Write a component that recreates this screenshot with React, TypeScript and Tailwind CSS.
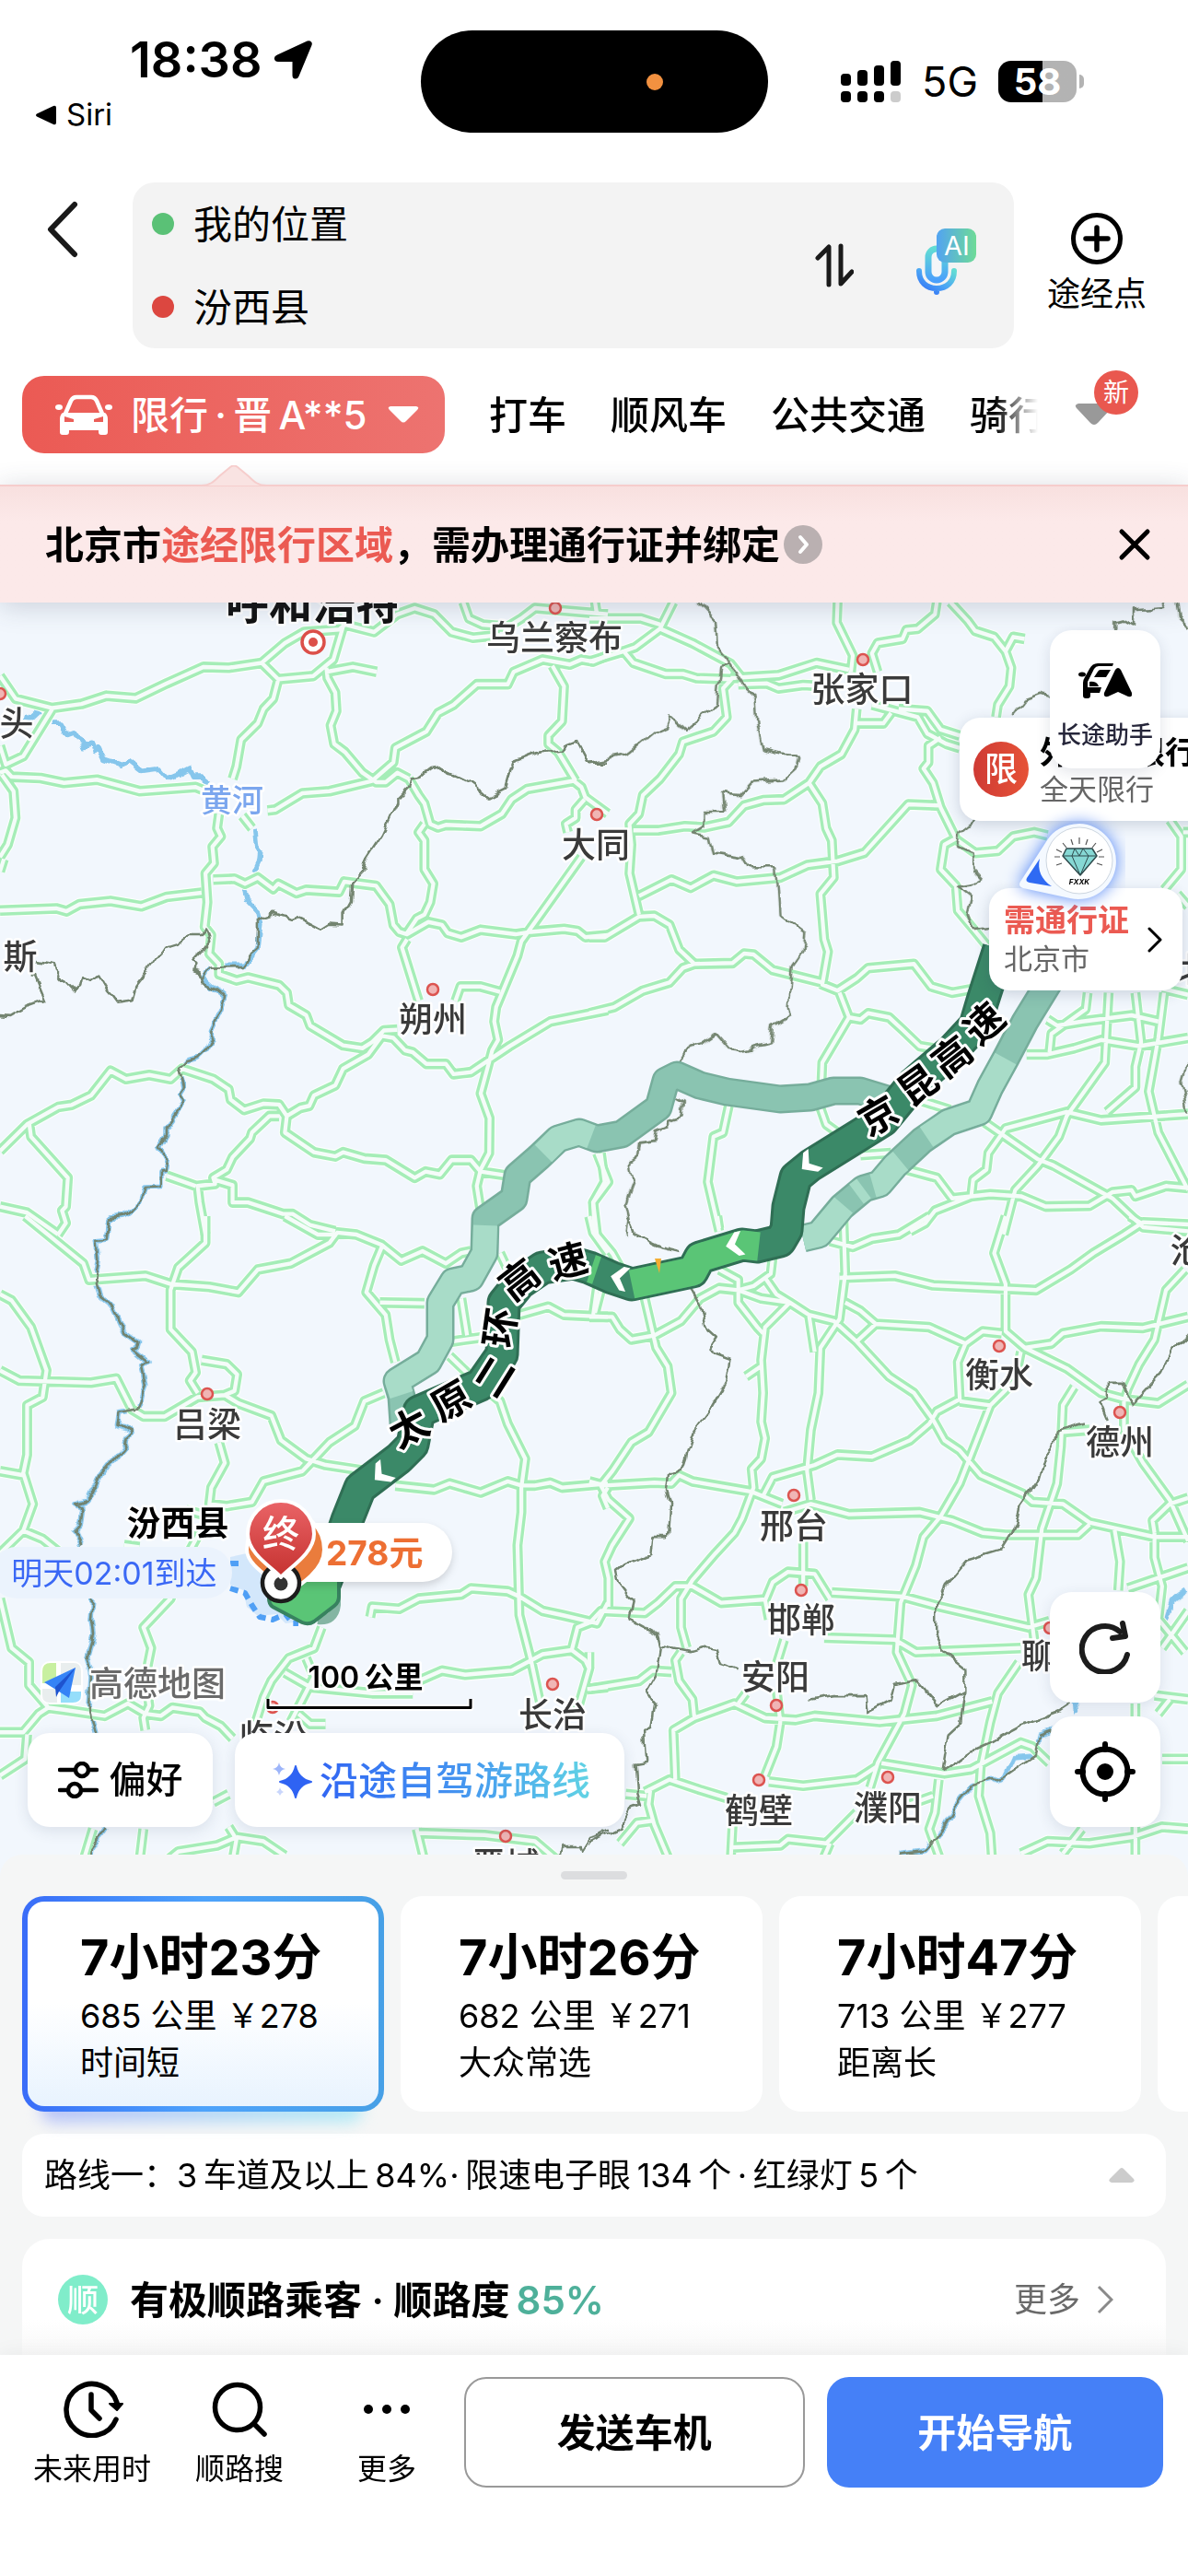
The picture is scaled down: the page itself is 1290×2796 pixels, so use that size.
import type { ReactNode } from 'react'

type Tile = { transform: string; roads: string; borders: string; rivers: string }
type City = { name: string; x: number; y: number; dot?: [number, number] }

// Map geometry is stored per tile, every tile has its own 1568 x 1568 grid
const tiles: Tile[] = [
  {
    transform: 'translate(0 640) scale(.4209 .4464)',
    roads:
      'M0 210L40 265 135 288 210 278 275 258 350 264 430 228 525 188 590 190 675 178 735 130 785 103 875 97 890 85 965 103 1025 60 1070 45 1120 60 1165 103 1220 117 1290 110' +
      'M675 178L718 218 808 210 860 170 885 90 890 30M718 218L705 265 680 290 665 325 622 365 610 430 600 460' +
      'M842 190L845 215 865 250 868 295 853 330 862 375 890 395 935 445 970 468 995 468 1025 445 1055 460M842 200L910 188 972 200' +
      'M0 445L15 440 30 455 105 458 165 470 250 462 360 490 505 480 530 490M135 290L60 405 15 425 0 380M5 450L35 490 40 555 20 620 0 650M10 655L0 685' +
      'M690 537L710 535 780 495 850 490 960 465 1015 420 1020 385 1100 345 1130 300 1170 280 1230 230 1310 230 1325 200 1400 170 1470 182 1500 170 1530 175 1568 160' +
      'M1055 460L1080 500 1095 520 1110 570 1130 578 1150 572 1240 575 1295 545 1320 510 1360 485 1480 465 1500 480 1510 505 1568 545M1508 510L1485 535 1485 555 1460 570 1465 590' +
      'M1425 185L1455 235 1450 320 1415 355 1415 375 1440 395 1485 465M1095 570L1080 590 1095 610 1095 680 1118 715 1110 760 1095 790 1075 800 1050 835' +
      'M0 780L145 775 172 782 205 765 285 757 365 770 430 747 520 737' +
      'M565 545L560 580 570 600 548 625 552 665 530 690 535 760 528 820 545 840 540 885 565 910 565 935 610 950 640 943 720 962 740 980 745 1010 790 1035 800 1060 885 1108 935 1115 960 1100 990 1072 1025 1070' +
      'M550 705L605 703 632 715 665 700 705 728 718 715 765 738 790 730 875 735 888 710 970 720 1005 765 1015 815 1030 832 1050 838 1105 808 1140 815 1155 835 1190 845 1240 827 1330 838 1370 832 1455 825 1490 830 1510 845 1568 840' +
      'M1050 850L1037 870 1075 985 1080 1000M1500 650L1345 855 1335 890 1280 1015 1275 1050 1285 1095 1270 1120 1240 1225 1263 1285 1262 1370 1240 1410 1230 1450 1240 1510M1175 1000L1188 965 1240 965 1290 978' +
      'M1568 1022L1420 1050 1315 1110 1215 1173 1170 1178 1150 1153 1100 1153 1065 1125 1045 1120 1015 1090 985 1085 950 1130 885 1165 865 1205 810 1230 798 1255 775 1260 740 1280 720 1252 680 1250 630 1265 595 1240 590 1215 550 1190 470 1165 440 1190 385 1180 325 1190 285 1170 235 1230 185 1253 150 1258 70 1300 0 1365' +
      'M75 1295L80 1330 175 1430 170 1500 160 1510 170 1540 150 1568M740 1280L735 1320 810 1368 865 1378 885 1368 940 1383 995 1387 1070 1430 1098 1415 1135 1422 1165 1387 1215 1387 1240 1415 1310 1425' +
      'M720 1280L695 1280 650 1320 645 1335 600 1380 585 1410 550 1430 555 1445 510 1450 515 1490 530 1568M555 1435L600 1448 600 1490 640 1490 730 1518 755 1518 800 1545 865 1560' +
      'M0 1500L70 1515 150 1568M430 1425L475 1440 505 1450M1195 30L1210 70 1245 85 1310 90 1345 70 1380 45 1568 60M1535 30L1540 60M1550 1370L1560 1440 1530 1490 1535 1568M625 550L650 580',
    borders:
      'M540 920L630 918 640 890 665 870 665 800 705 788 750 802 770 798 825 825 850 810 890 812 890 785 905 760 908 712 940 680 950 650 985 600 1005 560 1025 520 1025 508 1055 480 1060 458 1080 455 1105 437 1130 433 1205 467 1258 505 1305 483 1325 417 1385 395 1440 387 1488 370 1515 418 1568 418' +
      'M540 920L520 950 515 935 500 930 505 915 495 905 520 880 540 855 530 830 520 840 485 840 455 862 420 872 390 915 350 965 340 998 300 1003 270 965 255 940 240 952 210 942 205 965 192 978 140 925 135 912 95 905' +
      'M80 935L90 935 117 997 65 1015 25 1037 0 1035M520 950L550 965 580 988 570 1020 545 1070 545 1090 530 1120 510 1138 480 1145 463 1162 475 1210 465 1225 475 1240 450 1275 450 1290 430 1315 430 1330 415 1355 433 1385 428 1412 413 1415 413 1450 370 1452 355 1497 320 1525 280 1530 275 1568',
    rivers:
      'M65 305L85 310 100 298M130 325L160 325 175 350 190 345 215 380 235 375 245 395 255 385 270 415 310 428 335 418 365 440 405 435 430 462 460 450 490 435 500 455 520 455 540 470M655 580L660 625 672 640 670 660 655 690M640 725L630 735 635 755 665 785 672 815 665 870 635 905 630 915 575 915M540 920L525 945 550 965 580 988 570 1020 545 1070 545 1090 530 1120 510 1138 480 1145 463 1162 475 1210 465 1225 475 1240 450 1275 450 1290 430 1315 430 1330 415 1355 433 1385 428 1412 413 1415 413 1450 370 1452 355 1497 320 1525 280 1530 275 1568',
  },
  {
    transform: 'translate(640 640) scale(.4146 .4464)',
    roads:
      'M220 30L185 95 120 140 90 150 0 175M0 70L135 70 185 85M90 150L115 178 200 205 245 205 280 215 370 218M370 215L495 208 595 178 680 195M390 230L465 228 495 240 560 232 620 235M185 95L270 130 370 180 400 215' +
      'M375 215L350 240 360 310 325 345 245 370 235 400 185 460 140 500 130 545 105 570 110 620 105 690 130 790M650 30L648 80 690 160 685 200M910 30L905 60 860 95 830 98 820 120 755 130 740 155 755 200' +
      'M700 290L695 340 660 400 605 430 575 470 510 510 455 512 405 525 365 565 300 578 250 575 180 585 115 585M700 325L770 325 790 300M740 280L860 310 885 350 935 375 970 385M810 290L885 295 920 340 970 355' +
      'M920 360L888 380 888 420 875 435 900 470 920 530 960 605 930 620 920 680 960 720 965 780 1010 830 1045 870M945 30L990 75 1010 100 1060 115 1090 150 1105 190 1100 235 1070 280 1065 310M1090 150L1110 115 1140 120' +
      'M575 470L610 520 620 580 635 610 640 700 605 740 615 850 625 880 610 960 650 975 700 945 730 920 850 910 895 965 950 980 1010 970M920 525L835 522 720 640 650 660 570 670 500 700 385 710 325 695 265 725 215 705 130 745' +
      'M965 610L1010 640 1070 635 1110 600 1165 590 1200 598M0 845L40 845 130 795 170 793 210 815 235 875 275 910 375 908 405 885 430 887 480 925 610 955M0 1030L65 1015 140 975 210 955 245 920 275 910' +
      'M655 980L680 1040 610 1150 605 1260 620 1300 650 1320M680 1040L710 1045 730 1030 785 1040 820 1070 865 1110 900 1115M1145 1130L1200 1130 1270 1115 1340 1095 1440 1110 1568 1090M1200 1045L1225 1060 1290 1050 1420 1035 1490 1050' +
      'M1305 980L1300 1020 1210 1080 1205 1125M1360 980L1350 1150 1250 1280 1230 1330 1175 1400 1115 1460 1085 1568M1505 980L1490 1090 1465 1220 1490 1320 1568 1460M1430 980L1445 1100 1430 1160 1430 1210 1355 1270' +
      'M1568 1275L1340 1290 1250 1270 1090 1310 1045 1370 1040 1410 1005 1435 1000 1475 905 1510 880 1540 840 1560M1035 1295L1175 1385 1215 1400 1370 1480 1450 1550 1568 1560' +
      'M830 1410L910 1430 950 1480 1050 1470 1130 1475 1195 1500 1310 1498 1370 1465 1420 1460 1430 1475 1510 1450 1568 1455M860 1240L945 1265M710 1375L790 1370M365 1255L350 1320 325 1330 310 1440 325 1500 340 1560' +
      'M20 1370L50 1440 10 1490 20 1568M1520 560L1550 600 1550 680 1505 730M1555 590L1568 590M1540 740L1568 770M1500 970L1568 985',
    borders:
      'M285 30L330 75 335 140 370 185 405 240 435 265 440 330 455 390 500 400 550 405 545 430 510 460 425 465 390 500 345 495 350 540 300 540 300 575 270 592 320 600 330 640 400 650 415 675 490 675 498 790 565 835 560 880 530 920 520 1010 525 1035 480 1060 475 1105 400 1122 365 1118 330 1080 290 1105 260 1110 232 1145' +
      'M370 185L345 190 335 275 250 340 215 310 205 335 165 350 100 400 0 420M225 1235L243 1245 240 1280 205 1290 205 1310 180 1320 175 1340 130 1345 125 1380 105 1395 115 1440 95 1490 105 1530 100 1568' +
      'M1110 305L1140 270 1185 255 1205 260M1380 100L1380 80 1400 75 1430 90 1430 50 1505 45 1510 30M1540 30L1545 70 1568 90M1010 560L970 590 965 625 1000 640 1005 680 1030 705 1000 720 965 725 1000 750 990 790 1005 825 1045 820M1568 1150L1552 1200 1568 1270',
    rivers: '',
  },
  {
    transform: 'translate(0 1320) scale(.4209 .4464)',
    roads:
      'M65 0L215 115 230 155 375 145 440 165 540 172 615 185 665 130 750 115 850 65 870 40 920 45 985 70 1035 108 1090 85 1150 115 1190 90 1215 85M530 0L530 65 460 125 440 180 440 275 495 330 505 380 490 400 510 430M735 0L820 45 870 45' +
      'M0 190L30 205 80 270 120 375 110 440 70 460 70 580 60 625 85 700 60 765 0 820M0 375L50 400 235 405 300 395 340 470 370 487 425 487 510 440 580 435 615 455 700 485 725 545 790 590 840 605 945 620M0 620L60 630M520 350L585 360 612 385 605 425 580 435' +
      'M565 550L580 600 545 660 540 700 585 705 650 695 680 645 780 620 800 600 850 550 915 510 940 450 990 430M985 75L965 120 945 185 995 240 1005 300 1020 355M980 210L1095 212M1190 200L1205 290M1165 305L1240 295' +
      'M1160 340L1215 390 1290 450 1310 505 1355 590 1345 660 1345 720 1335 800 1340 970 1370 1080 1395 1190M1020 655L1120 665 1160 650 1240 672 1310 645 1345 655 1380 655 1420 648 1450 660 1568 650' +
      'M1340 240L1415 220 1455 240 1568 245M1520 0L1530 40 1568 90M1550 180L1535 235M1290 90L1310 130M955 975L960 950 1030 955 1080 930 1190 920 1215 905 1310 912 1340 925 1400 960 1450 970 1540 990 1568 940M1568 660L1555 680 1568 710' +
      'M60 765L110 785 150 815M320 800L360 805M480 715L520 725M520 760L480 830 440 930 370 1000 390 1050 375 1120 385 1190 370 1220 375 1250M0 930L30 1050 75 1085 75 1140 125 1195 165 1200 270 1215 330 1185 375 1210 415 1215 445 1195 515 1205 530 1220 570 1240 600 1270' +
      'M0 1255L60 1255 100 1210 125 1195M70 1260L65 1320 0 1360M830 1000L810 1050 745 1075 700 1130 680 1170 660 1230M790 1075L810 1120 750 1230M735 1110L800 1145 960 1160 1065 1160' +
      'M1080 1130L1140 1105 1200 1115 1320 1105 1400 1065 1475 1055 1510 1080 1520 1100 1490 1200M1475 1055L1490 1000 1530 985M770 1210L800 1235 840 1235M1515 1150L1568 1145' +
      'M590 1485L610 1515 600 1568M550 1425L590 1405M610 1510L680 1520 735 1555M430 1568L460 1545 560 1530 610 1510M240 1490L215 1568M1075 1490L1095 1568M1080 1500L1250 1505 1380 1520 1440 1568M370 1490L360 1568',
    borders:
      'M320 0L280 5 275 58 250 60 255 100 245 160 255 195 290 220 320 280 358 305 355 315 340 325 380 355 365 365 370 385 375 415 355 465 310 472 305 510 335 525 325 555 260 635 250 660 220 690 190 700 210 710 205 755 190 770 205 800M240 930L235 980 240 1020 225 1070 235 1120 230 1200 245 1255M270 1490L235 1540 230 1568' +
      'M1568 1495L1540 1510 1520 1515 1500 1545 1495 1530 1455 1530 1450 1568',
    rivers:
      'M320 0L280 5 275 58 250 60 255 100 245 160 255 195 290 220 320 280 358 305 355 315 340 325 380 355 365 365 370 385 375 415 355 465 310 472 305 510 335 525 325 555 260 635 250 660 220 690 190 700 210 710 205 755 190 770 205 800M240 930L235 980 240 1020 225 1070 235 1120 230 1200 245 1255M270 1490L235 1540 230 1568',
  },
  {
    transform: 'translate(640 1320) scale(.4146 .4464)',
    roads:
      'M10 0L15 40 60 90 90 140M25 140L10 240M0 245L60 245 80 275 110 300 170 290 240 255 290 200 340 175 390 180 430 170 475 140 480 100' +
      'M145 200L160 260 175 320 205 365 215 430 155 525 110 550 60 620 30 655 50 690 105 735 60 800 40 840 50 880 50 950M335 0L340 30M340 130L390 155 390 210 440 270 455 285' +
      'M390 180L450 200 525 210 575 240 640 255 700 305 785 390 850 430 900 495 930 545 970 570 1025 630 1135 675 1160 695 1240 700 1310 745 1480 780 1568 780M460 150L490 190 525 210M410 390L450 365M575 240L590 330' +
      'M525 210L460 270 450 350 455 430 450 500 460 540 450 590 425 615 430 660 400 735 380 770 330 820 270 885 240 930 240 1000 255 1050M665 0L670 140 655 250 605 320 600 430 580 520 570 620 580 690' +
      'M630 60L690 75 740 55 810 45 890 0M655 150L800 145 900 168 1170 180 1260 130 1320 90 1400 45 1450 15 1568 20M1415 0L1450 20M670 210L710 230 750 262 890 270 985 310 1030 280 1080 285M700 305L750 262' +
      'M1090 0L1060 90 1090 165 1090 280 1140 320 1210 310 1240 285 1340 268 1450 272 1568 245M985 310L965 355 970 445 910 475 890 505 840 545 740 585 650 580 590 605 480 635 455 680' +
      'M970 450L1050 460M1130 330L1115 400 1050 460 970 650 920 730 875 780 855 850 815 940 805 1060 845 1140 825 1210 755 1330 735 1390M1140 320L1250 370 1340 430 1400 445 1490 455 1568 410' +
      'M1560 130L1510 180 1480 300 1440 360 1410 420 1400 450M1270 415L1240 460 1235 560 1225 650 1185 760 1170 880 1150 920 1165 1030M1240 525L1310 520M1400 450L1400 520 1450 600 1520 690 1568 790' +
      'M0 645L40 655 170 648 215 650 235 630 270 645 425 670 505 700M510 720L580 700 680 725 865 720 950 740 1030 770 1090 775 1280 775 1310 750M560 790L560 900M460 935L480 890 520 865 590 870 630 930' +
      'M635 915L820 925 920 950 1150 1000 1205 985M0 990L30 960 145 965 180 940 225 900 270 900 345 940 460 932 470 980M615 1025L800 1030 855 1060 1130 1050M1125 1085L1070 1160 1050 1230 1025 1340 1020 1410 1050 1500 1055 1568' +
      'M0 1150L130 1130 165 1105 215 1108M240 1060L225 1080 235 1130 270 1175 275 1220 220 1250 225 1370M275 1220L380 1185 460 1220 540 1225 590 1215 760 1230 910 1215 1055 1180M510 1030L490 1090M490 1150L500 1230 490 1290 460 1360M0 1060L0 1100M410 1160L390 1185' +
      'M470 1375L560 1385 700 1370 750 1340M765 1330L930 1355 1000 1345 1130 1280 1160 1290 1205 1330M915 1370L905 1450 890 1490 920 1568M840 1430L900 1410M145 1400L210 1370 290 1395 360 1415M95 1405L150 1410M160 1390L155 1430 170 1480 210 1568M165 1470L125 1475 80 1525' +
      'M375 1480L370 1568M370 1535L500 1530 520 1515 620 1525 700 1450M630 1525L610 1568M1130 1550L1200 1520 1310 1525 1420 1510 1500 1485 1568 1490M1290 1490L1240 1550M1430 1480L1430 1568' +
      'M1375 760L1390 840 1385 910M1480 770L1480 830 1500 900 1490 980 1560 1060M1410 905L1568 855M1568 685L1520 700 1475 740 1480 770M1430 1185L1430 1220M1480 1165L1568 1175M1500 1320L1568 1320M1520 1175L1490 1210M1500 1050L1568 960',
    borders:
      'M100 0L120 45 190 75 235 85M265 180L290 220 300 270 330 295 310 325 370 345 360 400 310 480 270 530 240 615 205 630 200 670 210 700 205 780 165 780 160 820 90 845 70 860 75 890 115 940 105 980 175 1015 185 1050 175 1110 150 1150 170 1180 160 1240 145 1250 150 1330 120 1335 125 1400 135 1430 105 1440 80 1490 0 1525' +
      'M185 1045L265 1060 300 1050 330 1055 340 1090 390 1105M575 1175L640 1165 725 1165 730 1210 790 1180 800 1140 860 1130 915 1190 985 1155 985 1100 930 1060 905 1010 905 960 935 895 990 835 1080 810 1120 750 1130 700 1175 640 1190 590 1215 560 1220 525 1300 505' +
      'M1355 495L1335 450 1360 440 1360 405 1395 405 1425 455 1500 380 1530 320 1568 290M985 1155L975 1230 940 1260 925 1350 1000 1300 1060 1275 1130 1240 1230 1205 1270 1180M810 1550L880 1540 930 1480 960 1430 1000 1385 1085 1365 1170 1310 1180 1260 1210 1250',
    rivers: 'M810 1550L880 1540 930 1480 960 1430 1000 1385 1085 1365 1110 1315 1170 1310 1180 1260 1210 1250M1568 910L1530 935 1515 980M1270 1180L1275 1210',
  },
]

const cities: City[] = [
  { name: '乌兰察布', x: 602, y: 692, dot: [603, 660] },
  { name: '头', x: 18, y: 785, dot: [0, 753] },
  { name: '大同', x: 647, y: 917, dot: [648, 884] },
  { name: '朔州', x: 470, y: 1106, dot: [470, 1074] },
  { name: '斯', x: 22, y: 1038 },
  { name: '张家口', x: 936, y: 748, dot: [937, 716] },
  { name: '沧', x: 1289, y: 1357 },
  { name: '北', x: 1297, y: 1052 },
  { name: '吕梁', x: 225, y: 1546, dot: [225, 1513] },
  { name: '长治', x: 600, y: 1861, dot: [600, 1828] },
  { name: '临汾', x: 297, y: 1885, dot: [296, 1853] },
  { name: '晋城', x: 549, y: 2024, dot: [549, 1993] },
  { name: '邢台', x: 862, y: 1656, dot: [862, 1623] },
  { name: '邯郸', x: 870, y: 1758, dot: [870, 1726] },
  { name: '安阳', x: 842, y: 1820, dot: [843, 1851] },
  { name: '鹤壁', x: 824, y: 1965, dot: [824, 1932] },
  { name: '濮阳', x: 964, y: 1962, dot: [964, 1929] },
  { name: '聊城', x: 1146, y: 1797, dot: [1140, 1767] },
  { name: '衡水', x: 1085, y: 1492, dot: [1085, 1461] },
  { name: '德州', x: 1216, y: 1565, dot: [1216, 1533] },
]

const roadNames: [string, number, number, number][] = [
  ['京', 954, 1211, -30],
  ['昆', 997, 1178, -36],
  ['高', 1034, 1147, -38],
  ['速', 1069, 1111, -42],
  ['太', 444, 1550, -28],
  ['原', 490, 1521, -30],
  ['二', 537, 1494, -58],
  ['环', 543, 1441, -82],
  ['高', 564, 1389, -38],
  ['速', 617, 1369, -15],
]

const altWest =
  'M438 1545L436 1516 431 1499 465 1478 478 1454 478 1414 492 1391 511 1387 526 1360 527 1323 558 1301 562 1276 585 1256 606 1236 629 1229 648 1236 675 1231 715 1202 723 1173 735 1167 760 1178 789 1185 847 1193 880 1191 905 1184 934 1184 970 1195'
const altEast =
  'M1140 1065L1113 1109 1092 1149 1075 1180 1063 1207 1030 1218 1001 1238 972 1265 955 1285 938 1290 914 1310 889 1340 872 1344'
const mainRoute =
  'M1085 1030L1067 1086 1059 1113 1034 1140 992 1176 959 1216 930 1234 880 1265 864 1278 856 1310 854 1335 847 1347 822 1353 806 1351 760 1365 752 1380 719 1387 686 1394 665 1387 640 1376 623 1371 589 1376 564 1393 547 1414 545 1470 522 1503 455 1532 448 1568 433 1583 391 1615 377 1650 362 1695 352 1720'

const chevrons: [number, number, number][] = [
  [877, 1264, -38],
  [796, 1351, -12],
  [671, 1387, 12],
  [413, 1601, -40],
]

const routes = [
  { time: '7小时23分', meta: '685 公里 ￥278', tag: '时间短' },
  { time: '7小时26分', meta: '682 公里 ￥271', tag: '大众常选' },
  { time: '7小时47分', meta: '713 公里 ￥277', tag: '距离长' },
]

function StatusBar() {
  return (
    <div className="grid h-[198px] grid-cols-[1fr_auto_1fr] items-start pt-[33px]">
      <div className="flex flex-col gap-2">
        <div className="flex h-16 items-center gap-3 pl-[141px]">
          <span className="text-[54px] leading-none font-semibold">18:38</span>
          <svg className="h-[42px] w-[42px]" viewBox="0 0 42 42">
            <path d="M37 1.500c2.500-1 4.500 1 3.500 3.500L26.500 38.500c-1.200 3-5 2.600-5-.8V22H5c-3.600 0-4.200-4-1-5.300z" stroke="#000" strokeWidth="2" strokeLinejoin="round" />
          </svg>
        </div>
        <a href="#siri" className="flex h-10 items-center gap-[10px] pl-[38px] text-[33px]">
          <svg className="h-[22px] w-[24px]" viewBox="0 0 24 22">
            <path d="M2 9.500 20 1q3-1 3 2v16q0 3-3 2L2 12.500q-2-1.500 0-3z" />
          </svg>
          Siri
        </a>
      </div>
      <div className="flex h-[111px] w-[377px] items-center justify-end rounded-full bg-black pr-[114px]">
        <span className="h-[18px] w-[18px] rounded-full bg-[#f29140]" />
      </div>
      <div className="flex h-[111px] items-center justify-end gap-[22px] pr-[113px]">
        <svg className="h-[46px] w-[66px]" viewBox="0 0 66 46">
          <rect y="14" width="11" height="13" rx="4" />
          <rect x="18" y="10" width="11" height="17" rx="4" />
          <rect x="36" y="5" width="11" height="22" rx="4" />
          <rect x="54" width="11" height="27" rx="4" />
          <rect y="33" width="11" height="12" rx="4" />
          <rect x="18" y="33" width="11" height="12" rx="4" />
          <rect x="36" y="33" width="11" height="12" rx="4" />
          <rect x="54" y="33" width="11" height="12" rx="4" fill="#ccc" />
        </svg>
        <span className="text-[45px] leading-none">5G</span>
        <div className="flex items-center gap-[3px]">
          <div className="flex h-[45px] w-[85px] items-center justify-center rounded-[14px] bg-linear-to-r from-black from-57% to-[#b3b3b3] to-57% text-[40px] leading-none font-bold text-white">
            58
          </div>
          <span className="h-[15px] w-[5px] rounded-r-full bg-[#b3b3b3]" />
        </div>
      </div>
    </div>
  )
}

function SearchRow() {
  return (
    <div className="flex items-start">
      <button aria-label="返回" className="h-[102px] w-[144px] shrink-0 pl-[50px]">
        <svg className="h-[62px] w-[36px]" viewBox="0 0 36 62" fill="none" stroke="#1a1a1a" strokeWidth="6" strokeLinecap="round" strokeLinejoin="round">
          <path d="M31 4 5 31l26 27" />
        </svg>
      </button>
      <div className="flex min-w-0 flex-1 items-center rounded-[24px] bg-[#f3f3f3] pr-[40px] pl-[21px] text-[42px]">
        <div className="min-w-0 flex-1">
          <label className="flex h-[90px] items-center gap-[21px]">
            <span className="h-6 w-6 shrink-0 rounded-full bg-[#5ac176]" />
            <input aria-label="起点" defaultValue="我的位置" className="w-full bg-transparent outline-none" />
          </label>
          <label className="flex h-[90px] items-center gap-[21px]">
            <span className="h-6 w-6 shrink-0 rounded-full bg-[#dc4740]" />
            <input aria-label="终点" defaultValue="汾西县" className="w-full bg-transparent outline-none" />
          </label>
        </div>
        <button aria-label="交换起终点">
          <svg className="h-[48px] w-[42px]" viewBox="0 0 42 48" fill="none" stroke="#1a1a1a" strokeWidth="5" strokeLinecap="round" strokeLinejoin="round">
            <path d="M3 16 15 4v41M28 3v41l12-13" />
          </svg>
        </button>
        <button aria-label="语音输入" className="ml-[66px]">
          <svg className="h-[84px] w-[68px]" viewBox="0 0 68 84" fill="none">
            <defs>
              <linearGradient id="mic" x1="0" y1="1" x2="1" y2="0">
                <stop offset="0" stopColor="#2f6bf5" />
                <stop offset=".5" stopColor="#4ba5f5" />
                <stop offset="1" stopColor="#62dcd4" />
              </linearGradient>
              <linearGradient id="micBody" x1="0" y1="1" x2="0" y2="0">
                <stop offset="0" stopColor="#4aa0fb" />
                <stop offset="1" stopColor="#62dcd4" />
              </linearGradient>
              <linearGradient id="aiBadge">
                <stop offset="0" stopColor="#52a3f2" />
                <stop offset="1" stopColor="#6edb97" />
              </linearGradient>
            </defs>
            <rect x="15" y="24" width="18" height="34" rx="9" stroke="url(#micBody)" strokeWidth="7" fill="#f3f6f8" />
            <path d="M5 48c0 12 8 19 19 19s19-7 19-19M24 68v3" stroke="url(#mic)" strokeWidth="6" strokeLinecap="round" />
            <rect x="24" y="2" width="43" height="37" rx="9" fill="url(#aiBadge)" />
            <text x="46" y="31" textAnchor="middle" fontSize="29" fill="#fff">AI</text>
          </svg>
        </button>
      </div>
      <button className="flex w-[180px] shrink-0 flex-col items-center pt-[32px] text-[36px] leading-[42px]">
        <svg className="mb-[10px] h-[58px] w-[58px]" viewBox="0 0 58 58" fill="none" stroke="#000" strokeWidth="5" strokeLinecap="round">
          <circle cx="29" cy="29" r="25.500" />
          <path d="M29 17v24M17 29h24" strokeWidth="5.500" />
        </svg>
        途经点
      </button>
      <span className="w-[9px]" />
    </div>
  )
}

function ModeTabs() {
  return (
    <div className="mt-[30px] flex h-[84px] items-center pl-6 text-[42px] font-medium whitespace-nowrap">
      <button className="flex h-[84px] w-[459px] shrink-0 items-center rounded-[24px] bg-linear-to-r from-[#eb5a54] to-[#ed7370] pl-[36px] text-white">
        <svg className="mr-[20px] h-[44px] w-[62px]" viewBox="0 0 62 44" fill="currentColor">
          <path d="M8 20h46c2 1.500 3 4 3 7v14q0 3-3 3h-4q-3 0-3-3v-2H15v2q0 3-3 3H8q-3 0-3-3V27c0-3 1-5.500 3-7z" />
          <path d="M11 21 17 7q2-4 6-4h16q4 0 6 4l6 14" fill="none" stroke="currentColor" strokeWidth="4.500" />
          <ellipse cx="4" cy="14" rx="4" ry="3" />
          <ellipse cx="58" cy="14" rx="4" ry="3" />
          <path d="M10 24l10 3v3H10zM52 24l-10 3v3h10z" fill="#eb5e58" />
        </svg>
        <span>{'限行\u2009·\u2009晋\u2009A**5'}</span>
        <svg className="ml-[22px] h-[18px] w-[34px]" viewBox="0 0 34 18" fill="currentColor">
          <path d="M3 0h28q4 1 1 4L20 16q-3 3-6 0L2 4Q-1 1 3 0z" />
        </svg>
      </button>
      <nav className="ml-12 flex min-w-0 flex-1 gap-12 overflow-hidden mask-r-from-92%">
        <a href="#taxi">打车</a>
        <a href="#carpool">顺风车</a>
        <a href="#transit">公共交通</a>
        <a href="#ride">骑行</a>
      </nav>
      <button aria-label="更多出行方式" className="relative ml-[40px] w-[123px] shrink-0">
        <svg className="h-[24px] w-[42px]" viewBox="0 0 42 24" fill="#999">
          <path d="M4 0h34q5 1 2 5L25 21q-4 4-8 0L2 5q-3-4 2-5z" />
        </svg>
        <span className="absolute -top-[36px] left-[21px] flex h-12 w-12 items-center justify-center rounded-full bg-[#e9584f] text-[28px] font-normal text-white">新</span>
      </button>
    </div>
  )
}

function Banner() {
  return (
    <div className="relative z-10 mt-[34px] flex h-[128px] items-center justify-between border-t-2 border-[#f6cdcc] bg-linear-to-b from-[#f8e0df] to-[#fce9e9] to-30% pr-[40px] pl-[49px] text-[42px] font-semibold whitespace-nowrap shadow-[0_4px_28px_rgba(60,70,90,0.22)]">
      <svg className="absolute -top-[23px] left-[218px] h-[24px] w-[72px]" viewBox="0 0 72 24" fill="#f9e3e2" stroke="#f6cdcc" strokeWidth="2">
        <path d="M0 22c10 0 14-4 20-10l12-10q4-3 8 0l12 10c6 6 10 10 20 10" />
      </svg>
      <p className="flex items-center">
        北京市<span className="text-[#eb5a52]">途经限行区域</span>，需办理通行证并绑定
        <svg className="ml-1 h-[42px] w-[42px]" viewBox="0 0 42 42" fill="none">
          <circle cx="21" cy="21" r="21" fill="#bab0b1" />
          <path d="m18 13 7 8-7 8" stroke="#fff" strokeWidth="4" strokeLinecap="round" strokeLinejoin="round" />
        </svg>
      </p>
      <button aria-label="关闭">
        <svg className="h-[36px] w-[36px]" viewBox="0 0 36 36" stroke="#000" strokeWidth="5" strokeLinecap="round">
          <path d="m4 4 28 28M32 4 4 32" />
        </svg>
      </button>
    </div>
  )
}

function RoadMap() {
  return (
    <svg className="absolute inset-0 h-full w-full" viewBox="0 654 1290 1383" preserveAspectRatio="xMidYMid slice" fill="none" strokeLinejoin="round">
      <defs>
        <filter id="rough" x="0" y="600" width="1290" height="1440" filterUnits="userSpaceOnUse">
          <feTurbulence type="fractalNoise" baseFrequency=".05" numOctaves="2" seed="4" result="n" />
          <feDisplacementMap in="SourceGraphic" in2="n" scale="12" xChannelSelector="R" yChannelSelector="G" />
        </filter>
        <linearGradient id="endPin" x1="0" y1="0" x2="0" y2="1">
          <stop offset="0" stopColor="#ea6467" />
          <stop offset="1" stopColor="#c5312f" />
        </linearGradient>
      </defs>

      <g filter="url(#rough)" stroke="#86c6ec">
        {tiles.map(t => <path key={t.transform} transform={t.transform} d={t.rivers} strokeWidth="13" />)}
      </g>
      {tiles.map(t => <path key={t.transform} transform={t.transform} d={t.roads} stroke="#fbfffc" strokeWidth="31" />)}
      {tiles.map(t => <path key={t.transform} transform={t.transform} d={t.roads} stroke="#a5edb7" strokeWidth="26" />)}
      {tiles.map(t => <path key={t.transform} transform={t.transform} d={t.roads} stroke="#f5fcf9" strokeWidth="10" />)}
      <g filter="url(#rough)" stroke="#73846f">
        {tiles.map(t => <path key={t.transform} transform={t.transform} d={t.borders} strokeWidth="6" />)}
      </g>

      {/* county outline around the destination */}
      <path d="M250 1690l18 -4 40 30 20 44-18 2-10-10-20 2-12-10-4-18-14-6z" fill="#d3e7fb" />
      <path d="M250 1697l8 0 6 0M250 1724l16 5 8 14 8 12 14 3 14-6 8 10 6 0" stroke="#4f9ff5" strokeWidth="6" strokeDasharray="9 6" />

      {/* alternative routes */}
      <path d={altWest} stroke="#76ad9b" strokeWidth="31" />
      <path d={altWest} stroke="#8ac4b1" strokeWidth="26" />
      <path d="M436 1514L431 1499 465 1478 478 1454 478 1414 492 1391 511 1387 526 1360 527 1330M590 1252L606 1236 629 1229 642 1234" stroke="#a8dcc8" strokeWidth="26" />
      <path d={altEast} stroke="#76ad9b" strokeWidth="31" />
      <path d={altEast} stroke="#8ac4b1" strokeWidth="26" />
      <path d="M1092 1149L1075 1180 1063 1207 1030 1218 1006 1234M978 1260L972 1265 955 1285 948 1287M938 1290L930 1296M916 1308L889 1340 872 1344" stroke="#a8dcc8" strokeWidth="26" />
      <path d="M345 1758q18 2 20-16v-24" stroke="#84b5a3" strokeWidth="10" />

      {/* selected route */}
      <path d={mainRoute} stroke="#2f6e54" strokeWidth="37" />
      <path d={mainRoute} stroke="#3b8968" strokeWidth="31" />
      <path d="M824 1353L806 1351 760 1365 752 1380 719 1387 686 1394M642 1377l6 2" stroke="#5ac576" strokeWidth="31" />
      <path d="M292 1715h76v18q0 6-5 10l-22 17q-6 4-13 1l-32-17q-4-3-4-9z" fill="#5ac576" stroke="#37825f" strokeWidth="4" />
      <path d="M711 1366h7l-2 16z" fill="#f3ad33" />
      {chevrons.map(([x, y, r]) => (
        <path key={x} transform={`translate(${x} ${y}) rotate(${r})`} d="M-8 0 4-13h7L2 0l9 13H4z" fill="#fff" />
      ))}

      {cities.map(c => (
        <g key={c.name}>
          {c.dot && <circle cx={c.dot[0]} cy={c.dot[1]} r="6" fill="#f0b5b5" stroke="#dc5450" strokeWidth="2.500" />}
          <text x={c.x} y={c.y + 14} textAnchor="middle" fontSize="37" fontWeight="500" fill="#3a3a3a" stroke="#fff" strokeWidth="5" paintOrder="stroke">
            {c.name}
          </text>
        </g>
      ))}
      <text x="339" y="672" textAnchor="middle" fontSize="47" fontWeight="700" fill="#111" stroke="#fff" strokeWidth="5" paintOrder="stroke">呼和浩特</text>
      <circle cx="340" cy="697" r="12" fill="#fff" stroke="#dc4f49" strokeWidth="3.500" />
      <circle cx="340" cy="697" r="5" fill="#dc4f49" />
      <text x="252" y="881" textAnchor="middle" fontSize="34" fontWeight="500" fill="#7ba6ee" stroke="#fff" strokeWidth="5" paintOrder="stroke">黄河</text>
      {roadNames.map(([ch, x, y, r]) => (
        <text key={`${ch}${x}`} transform={`translate(${x} ${y}) rotate(${r})`} y="15" textAnchor="middle" fontSize="42" fontWeight="700" fill="#000" stroke="#fff" strokeWidth="6" paintOrder="stroke">
          {ch}
        </text>
      ))}

      {/* destination */}
      <text x="193" y="1667" textAnchor="middle" fontSize="37" fontWeight="700" fill="#000" stroke="#fff" strokeWidth="5" paintOrder="stroke">汾西县</text>
      <rect x="-10" y="1679" width="262" height="56" rx="28" fill="#ebf3fd" />
      <text x="124" y="1720" textAnchor="middle" fontSize="34" fill="#3a68f5">明天02:01到达</text>
      <g className="drop-shadow-lg">
        <rect x="300" y="1653" width="191" height="64" rx="32" fill="#fff" />
      </g>
      <path d="M311 1730c-8-14-43-28-43-48a42 42 0 0 1 84 0c0 22-25 38-41 48z" fill="#ea7c3c" stroke="#fff" strokeWidth="4" />
      <text x="354" y="1699" fontSize="37" fontWeight="700" fill="#ed6f33">278元</text>
      <circle cx="305" cy="1718" r="20" fill="#fff" stroke="#1c1c1c" strokeWidth="4.500" />
      <circle cx="305" cy="1719" r="7.500" fill="#333" />
      <path d="M305 1712c-7-9-36-25-36-47a36 36 0 0 1 72 0c0 22-29 38-36 47z" fill="url(#endPin)" stroke="#fff" strokeWidth="4" />
      <text x="305" y="1679" textAnchor="middle" fontSize="40" fontWeight="500" fill="#fff">终</text>

      {/* map brand */}
      <rect x="44" y="1803" width="46" height="47" rx="10" fill="#fff" />
      <path d="M46 1814q0-9 9-9h6v22H46z" fill="#c8f0a0" />
      <path d="M66 1805h14q8 0 8 9v15H66zM46 1833h16v15h-8q-8 0-8-8z" fill="#e9eeee" />
      <path d="M66 1836h22v4q0 8-9 8H66z" fill="#95defb" />
      <path d="M48 1826l34-16-7 33-11-7z" fill="#3583f6" />
      <path d="M82 1810l-18 26-3 6-1-11z" fill="#1e53cf" />
      <text x="97" y="1841" fontSize="37" fontWeight="500" fill="#6a6a6a" stroke="#fff" strokeWidth="5" paintOrder="stroke">高德地图</text>
      <text x="397" y="1832" textAnchor="middle" fontSize="32" fontWeight="600" fill="#000" stroke="#fff" strokeWidth="5" paintOrder="stroke">{'100\u2009公里'}</text>
      <path d="M291 1844v9.500h220V1844" stroke="#fff" strokeWidth="7" />
      <path d="M291 1844v9.500h220V1844" stroke="#000" strokeWidth="3" />
    </svg>
  )
}

function Avatar() {
  return (
    <svg className="absolute top-[222px] right-[68px] z-10 h-[124px] w-[140px]" viewBox="0 0 140 124">
      <path d="M90 18a41 41 0 1 1-10 81L29 88q-6-2-3-7l29-45q11-17 35-18z" fill="#f4f9ff" className="drop-shadow-[0_0_9px_#4f83f5]" />
      <path d="M47 56c-3 12 2 23 13 30l-24-4q-5-1-3-5z" fill="#2f6af3" />
      <circle cx="90" cy="58" r="36" fill="#fff" stroke="#cdd6e0" strokeWidth="1" />
      <path d="M76 45h28l5 8-18 21-19-21z" fill="#86d8d4" stroke="#2e4a4c" strokeWidth="1.500" strokeLinejoin="round" />
      <path d="M72 53h37M82 53l9 21 9-21-6-8-4 8-5-8z" fill="none" stroke="#2e4a4c" strokeWidth="1" />
      <path d="M90 33v7M81 35l2 6M99 35l-2 6M72 39l4 5M108 39l-4 5M65 46l6 3M115 46l-6 3M63 54h6M117 54h-6M65 63l6-2M115 63l-6-2" stroke="#555" strokeWidth="1.200" />
      <text x="90" y="84" textAnchor="middle" fontSize="8" fontWeight="700" fontStyle="italic">FXXK</text>
    </svg>
  )
}

function MapButton({ label, children }: { label: string; children: ReactNode }) {
  return (
    <button aria-label={label} className="flex h-[120px] w-[120px] items-center justify-center rounded-[24px] bg-white shadow-[0_4px_16px_rgba(40,60,90,0.12)]">
      {children}
    </button>
  )
}

function MapArea() {
  return (
    <section className="relative min-h-[900px] flex-1 overflow-hidden bg-[#f2f7fd]">
      <RoadMap />

      <div className="absolute top-[125px] -right-[30px] flex h-[112px] w-[278px] items-center gap-[12px] rounded-[22px] bg-white pl-[15px] whitespace-nowrap shadow-[0_4px_16px_rgba(40,60,90,0.2)]">
        <span className="flex h-[60px] w-[60px] shrink-0 items-center justify-center rounded-full bg-linear-to-r from-[#cf3a34] to-[#e65237] text-[36px] font-medium text-white">限</span>
        <div className="pt-1">
          <p className="text-[34px] leading-[40px] font-bold">外地车限行</p>
          <p className="text-[31px] leading-[40px] text-[#666]">全天限行</p>
        </div>
      </div>
      <button className="absolute top-[310px] right-[6px] flex h-[111px] w-[210px] items-center justify-between rounded-[22px] bg-white pr-[22px] pl-[16px] text-left whitespace-nowrap shadow-[0_4px_16px_rgba(40,60,90,0.2)]">
        <span>
          <span className="block text-[34px] leading-[42px] font-bold text-[#eb5a52]">需通行证</span>
          <span className="block text-[31px] leading-[42px] text-[#666]">北京市</span>
        </span>
        <svg className="h-[28px] w-[16px]" viewBox="0 0 16 28" fill="none" stroke="#000" strokeWidth="3" strokeLinecap="round" strokeLinejoin="round">
          <path d="m2 2 12 12L2 26" />
        </svg>
      </button>
      <Avatar />
      <button className="absolute top-[30px] right-[30px] flex h-[150px] w-[120px] flex-col items-center justify-between rounded-[24px] bg-white pt-[35px] pb-[18px] text-[26px] leading-9 font-medium whitespace-nowrap text-[#26263a] shadow-[0_4px_16px_rgba(40,60,90,0.14)]">
        <svg className="h-[40px] w-[58px]" viewBox="0 0 58 40">
          <ellipse cx="4" cy="13" rx="4" ry="2.500" />
          <path d="M38 1H21q-6 0-9 6l-5 9q-2 3-2 6v14q0 3 3 3h2q3 0 3-3v-3h10l2-6H10v-6l7-14q2-3 5-3h15z" />
          <path d="M24 8h11l-5 8H17l4-6q1-2 3-2zM12 21q8-1 10 5H12z" />
          <path d="M40 8q3-4 6 0l12 25q1 5-4 4l-11-5-11 5q-5 1-4-4z" />
        </svg>
        长途助手
      </button>

      <div className="absolute inset-x-[30px] bottom-[54px] flex items-end justify-between whitespace-nowrap">
        <div className="flex gap-6">
          <button className="flex h-[102px] w-[201px] items-center justify-center gap-3 rounded-[24px] bg-white shadow-[0_4px_16px_rgba(40,60,90,0.12)]">
            <svg className="h-[40px] w-[44px]" viewBox="0 0 44 40" fill="none" stroke="#000" strokeWidth="4.500" strokeLinecap="round">
              <path d="M2 9h16M34 9h8M2 31h8M26 31h16" />
              <circle cx="26" cy="9" r="7" />
              <circle cx="18" cy="31" r="7" />
            </svg>
            <span className="text-[40px] font-medium">偏好</span>
          </button>
          <button className="flex h-[102px] items-center gap-[8px] rounded-[24px] bg-white pr-[37px] pl-[40px] shadow-[0_4px_16px_rgba(40,60,90,0.12)]">
            <svg className="h-[40px] w-[44px]" viewBox="0 0 44 40">
              <path d="M26 5q3 14 17 17-14 3-17 17-3-14-17-17Q23 19 26 5z" fill="#2f63f3" stroke="#2f63f3" strokeWidth="2" strokeLinejoin="round" />
              <path d="M8 1q1 6 7 7-6 1-7 7-1-6-7-7 6-1 7-7z" fill="#9db5fa" />
              <path d="M9 28q1 4 4 5-3 1-4 4-1-3-4-4 3-1 4-5z" fill="#c9d6fc" />
            </svg>
            <span className="bg-linear-to-r from-[#3266f3] via-[#4492f0] to-[#62d3e4] bg-clip-text text-[42px] font-medium text-transparent">沿途自驾游路线</span>
          </button>
        </div>
        <div className="flex flex-col gap-[15px]">
          <MapButton label="刷新">
            <svg className="h-[58px] w-[56px]" viewBox="0 0 56 58" fill="none" stroke="#1c1c1c" strokeWidth="6" strokeLinecap="round">
              <path d="M52 37A25 25 0 1 1 44 12" />
              <path d="M47 3l3 14-14 2" fill="none" strokeLinejoin="round" />
            </svg>
          </MapButton>
          <MapButton label="定位">
            <svg className="h-[66px] w-[66px]" viewBox="0 0 66 66" fill="none" stroke="#000" strokeWidth="6" strokeLinecap="round">
              <circle cx="33" cy="33" r="24.500" />
              <circle cx="33" cy="33" r="9" fill="#000" stroke="none" />
              <path d="M33 3v6M33 57v6M3 33h6M57 33h6" />
            </svg>
          </MapButton>
        </div>
      </div>
    </section>
  )
}

function RouteSheet() {
  return (
    <section className="relative z-10 -mt-6 overflow-hidden rounded-t-[24px] bg-[#f5f6f6] pt-[18px] whitespace-nowrap">
      <div className="mx-auto h-[9px] w-[72px] rounded-full bg-[#dcdddf]" />
      <div className="mt-[18px] flex gap-[18px] pl-6">
        {routes.map((r, i) => (
          <div key={r.time} className="relative shrink-0">
            {i === 0 && <span className="absolute -bottom-3 left-[20px] h-[30px] w-[350px] rounded-full bg-linear-to-r from-[#b9c3f7] to-[#b5ebf5] blur-[8px]" />}
            <button
              className={
                i === 0
                  ? 'relative block h-[234px] w-[393px] rounded-[24px] bg-linear-to-r from-[#3a6cf8] via-[#4ea3fb] to-[#47a0e6] p-[6px] text-left'
                  : 'relative block h-[234px] w-[393px] rounded-[24px] bg-white p-[6px] text-left'
              }
            >
              <span className={i === 0 ? 'block h-full rounded-[18px] bg-linear-to-b from-white from-50% to-[#e8f3fe] pt-[29px] pl-[57px]' : 'block h-full pt-[29px] pl-[57px]'}>
                <span className="block text-[54px] leading-[64px] font-bold">{r.time}</span>
                <span className="mt-[6px] block text-[36px] leading-[51px]">{r.meta}</span>
                <span className="block text-[36px] leading-[51px]">{r.tag}</span>
              </span>
            </button>
          </div>
        ))}
        <div className="h-[234px] w-[393px] shrink-0 rounded-[24px] bg-white" />
      </div>

      <button className="mx-6 mt-6 flex h-[90px] w-[calc(100%-48px)] items-center justify-between rounded-[24px] bg-white pr-[34px] pl-[24px] text-[36px]">
        <span>{'路线一：3\u2009车道及以上\u200984%·\u2009限速电子眼\u2009134\u2009个\u2009·\u2009红绿灯\u20095\u2009个'}</span>
        <svg className="h-[16px] w-[28px]" viewBox="0 0 28 16" fill="#ccc">
          <path d="M12 1q2-2 4 0l11 11q2 3-2 4H3q-4-1-2-4z" />
        </svg>
      </button>

      <div className="mx-6 mt-6 flex h-[126px] items-center rounded-t-[30px] bg-linear-to-b from-white from-70% to-[#f8f8f8] pt-[6px] pr-[57px] pl-[39px]">
        <span className="flex h-[54px] w-[54px] items-center justify-center rounded-full bg-[#80edca] text-[34px] font-medium text-white">顺</span>
        <p className="ml-6 flex-1 text-[42px] font-semibold">
          {'有极顺路乘客 · 顺路度\u2009'}
          <span className="text-[#4eb09a]">85%</span>
        </p>
        <a href="#more" className="flex items-center gap-[18px] text-[36px] text-[#6a6a6a]">
          更多
          <svg className="h-[32px] w-[18px]" viewBox="0 0 18 32" fill="none" stroke="#8a8a8a" strokeWidth="3">
            <path d="m2 2 14 14L2 30" />
          </svg>
        </a>
      </div>
    </section>
  )
}

function BottomBar() {
  return (
    <footer className="relative z-10 flex bg-white pt-6 pr-[27px] pb-[96px] pl-[20px] shadow-[0_-2px_20px_rgba(0,0,0,0.05)]">
      <button className="flex h-[120px] w-[160px] flex-col items-center justify-between text-[32px] leading-[40px]">
        <svg className="h-[66px] w-[68px]" viewBox="0 0 68 66" fill="none" stroke="#000" strokeWidth="5.500" strokeLinecap="round" strokeLinejoin="round">
          <path d="M60 46A28 28 0 1 1 61 28" />
          <path d="M53 29h14l-6 7z" fill="#000" strokeWidth="2" />
          <path d="M33 19v17l9 9" />
        </svg>
        未来用时
      </button>
      <button className="flex h-[120px] w-[160px] flex-col items-center justify-between text-[32px] leading-[40px]">
        <svg className="h-[66px] w-[60px]" viewBox="0 0 60 66" fill="none" stroke="#000" strokeWidth="5.500" strokeLinecap="round">
          <circle cx="28" cy="33" r="24.500" />
          <path d="m46 51 11 11" />
        </svg>
        顺路搜
      </button>
      <button className="flex h-[120px] w-[160px] flex-col items-center justify-between text-[32px] leading-[40px]">
        <svg className="h-[66px] w-[50px]" viewBox="0 0 50 66">
          <circle cx="5" cy="35" r="5" />
          <circle cx="25" cy="35" r="5" />
          <circle cx="45" cy="35" r="5" />
        </svg>
        更多
      </button>
      <button className="ml-1 h-[120px] flex-1 rounded-[24px] border-2 border-[#999] text-[42px] font-semibold">发送车机</button>
      <button className="ml-6 h-[120px] flex-1 rounded-[24px] bg-[#4580f7] text-[42px] font-semibold text-white">开始导航</button>
    </footer>
  )
}

export default function App() {
  return (
    <main className="flex min-h-screen flex-col overflow-hidden bg-white font-['Inter','Noto_Sans_CJK_SC',sans-serif] text-black">
      <StatusBar />
      <SearchRow />
      <ModeTabs />
      <Banner />
      <MapArea />
      <RouteSheet />
      <BottomBar />
    </main>
  )
}
